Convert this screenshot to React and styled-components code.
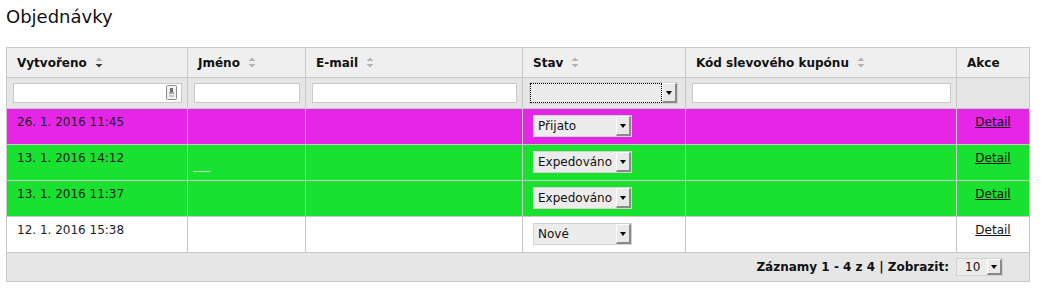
import React from "react";
import styled, { createGlobalStyle } from "styled-components";

const GlobalStyle = createGlobalStyle`
  html, body { margin: 0; padding: 0; background: #fff; }
  body { font-family: "DejaVu Sans", Verdana, sans-serif; font-size: 12px; color: #222; }
`;

const Page = styled.div`
  padding: 6px 6px 0 6px;
`;

const Title = styled.h1`
  margin: 0;
  font-size: 18px;
  font-weight: normal;
  line-height: 21px;
  color: #111;
`;

const Table = styled.table`
  margin-top: 20px;
  width: 1024px;
  table-layout: fixed;
  border-collapse: collapse;
  border: 1px solid #c8c8c8;
`;

const HeadCell = styled.th`
  height: 30px;
  padding: 0 0 0 10px;
  box-sizing: border-box;
  background: #efefef;
  border: 1px solid #c8c8c8;
  text-align: left;
  vertical-align: middle;
  font-weight: bold;
  font-size: 12px;
  color: #111;
  white-space: nowrap;
`;

const HeadInner = styled.span`
  display: inline-flex;
  align-items: center;
  gap: 8px;
`;

const FilterCell = styled.td`
  height: 31px;
  padding: 0 5px 0 6px;
  box-sizing: border-box;
  background: #e6e6e6;
  border: 1px solid #c8c8c8;
  vertical-align: middle;
`;

const InputWrap = styled.div`
  position: relative;
  display: flex;
`;

const TextInput = styled.input`
  width: 100%;
  height: 20px;
  box-sizing: border-box;
  border: 1px solid #c8c8c8;
  background: #fff;
  margin: 0;
  padding: 0 4px;
  font: 12px "DejaVu Sans", sans-serif;
  outline: none;
`;

const CalIcon = styled.svg`
  position: absolute;
  right: 5px;
  top: 2px;
`;

const Row = styled.tr`
  background: ${(p) => p.$bg};
`;

const Cell = styled.td`
  height: 36px;
  box-sizing: border-box;
  padding: 6px 10px 0 10px;
  border: 1px solid #c8c8c8;
  vertical-align: top;
  font-size: 12px;
  line-height: 14px;
  color: #1e1e1e;
  text-align: ${(p) => (p.$center ? "center" : "left")};
  white-space: nowrap;
`;

const DetailLink = styled.a`
  color: #111;
  text-decoration: underline;
  cursor: pointer;
`;

const Blank = styled.span`
  display: block;
  width: 18px;
  margin: 20px 0 0 -5px;
  border-bottom: 1px solid #c8c8c8;
`;

const SelectBox = styled.div`
  display: inline-flex;
  box-sizing: border-box;
  width: ${(p) => p.$w}px;
  height: ${(p) => p.$h}px;
  border: 1px solid #d2d2d2;
  background: #ececec;
  font: 12px "DejaVu Sans", sans-serif;
  color: #111;
  vertical-align: top;
`;

const SelectLabel = styled.span`
  flex: 1;
  display: flex;
  align-items: center;
  padding-left: ${(p) => (p.$pad ?? 4)}px;
  white-space: nowrap;
  overflow: hidden;
  outline: ${(p) => (p.$focus ? "1px dotted #000" : "none")};
  outline-offset: -1px;
`;

const SelectButton = styled.span`
  width: 15px;
  box-sizing: border-box;
  border-top: 1px solid #fff;
  border-left: 1px solid #fff;
  border-right: 2px solid #8a8a8a;
  border-bottom: 2px solid #8a8a8a;
  background: #e9e9e9;
  display: flex;
  align-items: center;
  justify-content: center;
`;

const Arrow = styled.span`
  width: 0;
  height: 0;
  border-left: 3px solid transparent;
  border-right: 3px solid transparent;
  border-top: 4px solid #000;
`;

const FootCell = styled.td`
  height: 29px;
  box-sizing: border-box;
  padding: 0 26px 0 10px;
  background: #e6e6e6;
  border: 1px solid #c8c8c8;
  text-align: right;
  vertical-align: middle;
`;

const FootInner = styled.div`
  display: inline-flex;
  align-items: center;
  gap: 7px;
  font-weight: bold;
  color: #111;
`;

function Select({ value, w, h, focus, pad }) {
  return (
    <SelectBox $w={w} $h={h}>
      <SelectLabel $focus={focus} $pad={pad}>{value}</SelectLabel>
      <SelectButton>
        <Arrow />
      </SelectButton>
    </SelectBox>
  );
}

function SortIcon({ active }) {
  return (
    <svg width="8" height="11" viewBox="0 0 8 11">
      <polygon points="0.5,4 4,0.5 7.5,4" fill="#b4b4b4" />
      <polygon points="0.5,7 4,10.5 7.5,7" fill={active ? "#3a3a3a" : "#b4b4b4"} />
    </svg>
  );
}

const columns = [
  { label: "Vytvořeno", w: 181, sort: true, active: true },
  { label: "Jméno", w: 118, sort: true },
  { label: "E-mail", w: 217, sort: true },
  { label: "Stav", w: 163, sort: true },
  { label: "Kód slevového kupónu", w: 271, sort: true },
  { label: "Akce", w: 73, sort: false },
];

const rows = [
  { date: "26. 1. 2016 11:45", state: "Přijato", bg: "#e626e6" },
  { date: "13. 1. 2016 14:12", state: "Expedováno", bg: "#19e12f", blank: true },
  { date: "13. 1. 2016 11:37", state: "Expedováno", bg: "#19e12f" },
  { date: "12. 1. 2016 15:38", state: "Nové", bg: "#ffffff" },
];

export default function App() {
  return (
    <>
      <GlobalStyle />
      <Page>
        <Title>Objednávky</Title>
        <Table>
          <colgroup>
            {columns.map((c) => (
              <col key={c.label} style={{ width: c.w }} />
            ))}
          </colgroup>
          <thead>
            <tr>
              {columns.map((c) => (
                <HeadCell key={c.label}>
                  <HeadInner>
                    {c.label}
                    {c.sort && <SortIcon active={c.active} />}
                  </HeadInner>
                </HeadCell>
              ))}
            </tr>
            <tr>
              <FilterCell>
                <InputWrap>
                  <TextInput />
                  <CalIcon width="11" height="15" viewBox="0 0 11 15">
                    <rect x="0.5" y="0.5" width="10" height="14" rx="1" fill="#f2f2f2" stroke="#8c8c8c" />
                    <rect x="4" y="3" width="3" height="4" fill="#6e6e6e" />
                    <rect x="3" y="7" width="5" height="2" fill="#a0a0a0" />
                    <rect x="3" y="10" width="5" height="2" fill="#c4c4c4" />
                  </CalIcon>
                </InputWrap>
              </FilterCell>
              <FilterCell>
                <TextInput />
              </FilterCell>
              <FilterCell>
                <TextInput />
              </FilterCell>
              <FilterCell>
                <Select value="" w={149} h={22} focus pad={0} />
              </FilterCell>
              <FilterCell>
                <TextInput />
              </FilterCell>
              <FilterCell />
            </tr>
          </thead>
          <tbody>
            {rows.map((r, i) => (
              <Row key={i} $bg={r.bg}>
                <Cell>{r.date}</Cell>
                <Cell>{r.blank && <Blank />}</Cell>
                <Cell />
                <Cell>
                  <Select value={r.state} w={99} h={22} />
                </Cell>
                <Cell />
                <Cell $center>
                  <DetailLink>Detail</DetailLink>
                </Cell>
              </Row>
            ))}
          </tbody>
          <tfoot>
            <tr>
              <FootCell colSpan={6}>
                <FootInner>
                  Záznamy 1 - 4 z 4 | Zobrazit:
                  <Select value="10" w={47} h={18} pad={8} />
                </FootInner>
              </FootCell>
            </tr>
          </tfoot>
        </Table>
      </Page>
    </>
  );
}
